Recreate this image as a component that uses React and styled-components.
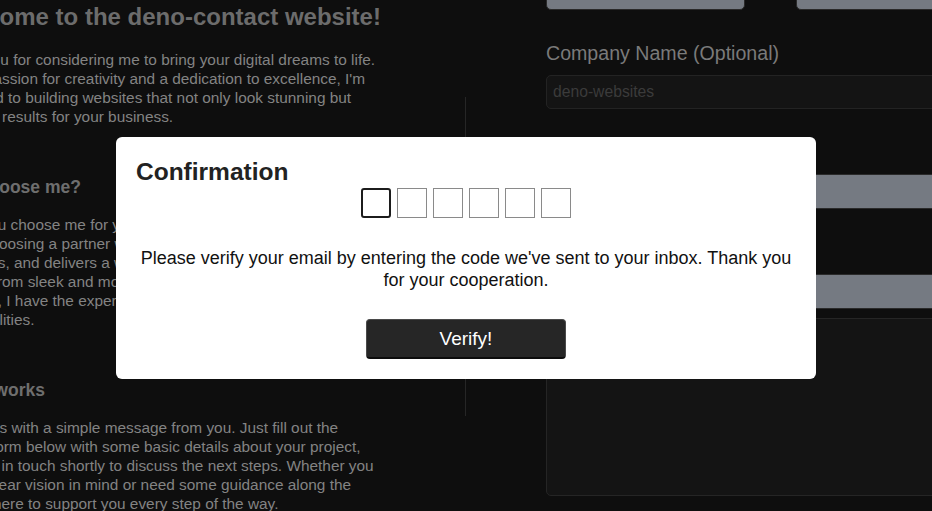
import React from "react";
import styled, { createGlobalStyle } from "styled-components";

const GlobalStyle = createGlobalStyle`
  * {
    box-sizing: border-box;
  }
  html,
  body {
    margin: 0;
    padding: 0;
    background: #0e0e0e;
    overflow: hidden;
  }
  body {
    font-family: "Liberation Sans", Arial, sans-serif;
  }
`;

const intro = [
  "Thank you for considering me to bring your digital dreams to life.",
  "With a passion for creativity and a dedication to excellence, I'm",
  "dedicated to building websites that not only look stunning but",
  "generate results for your business.",
];

const whyMe = [
  "When you choose me for your next website, you're choosing a",
  "you're choosing a partner who listens, understands your",
  "objectives, and delivers a website tailored to your needs.",
  "needs. From sleek and modern layouts to complex web",
  "solutions, I have the expertise to bring your ideas to life with",
  "functionalities.",
];

const howItWorks = [
  "It all starts with a simple message from you. Just fill out the",
  "contact form below with some basic details about your project,",
  "so I'll get in touch shortly to discuss the next steps. Whether you",
  "have a clear vision in mind or need some guidance along the",
  "way I'm here to support you every step of the way.",
];

const Lines = ({ lines }) =>
  lines.map((line, i) => (
    <React.Fragment key={i}>
      {line}
      {i < lines.length - 1 && <br />}
    </React.Fragment>
  ));

const App = () => {
  return (
    <>
      <GlobalStyle />
      <Page>
        <InfoColumn>
          <Title>Welcome to the deno-contact website!</Title>
          <Paragraph $first>
            <Lines lines={intro} />
          </Paragraph>
          <SectionTitle>Why choose me?</SectionTitle>
          <Paragraph>
            <Lines lines={whyMe} />
          </Paragraph>
          <SectionTitle>How it works</SectionTitle>
          <Paragraph>
            <Lines lines={howItWorks} />
          </Paragraph>
        </InfoColumn>

        <Divider />

        <FormColumn>
          <FieldRow>
            <Field $width="199px" $after={0}>
              <Label>First Name</Label>
              <Input $filled readOnly />
            </Field>
            <Field $width="199px" $after={0}>
              <Label>Last Name</Label>
              <Input $filled readOnly />
            </Field>
          </FieldRow>
          <Field>
            <Label>Company Name (Optional)</Label>
            <Input placeholder="deno-websites" />
          </Field>
          <Field>
            <Label>Email</Label>
            <Input $filled readOnly />
          </Field>
          <Field $after={9}>
            <Label>Phone</Label>
            <Input $filled readOnly />
          </Field>
          <MessageArea />
        </FormColumn>
      </Page>

      <Backdrop>
        <Dialog>
          <DialogTitle>Confirmation</DialogTitle>
          <CodeRow>
            {[0, 1, 2, 3, 4, 5].map((i) => (
              <CodeBox key={i} maxLength={1} $focused={i === 0} />
            ))}
          </CodeRow>
          <DialogText>
            Please verify your email by entering the code we've sent to your
            inbox. Thank you for your cooperation.
          </DialogText>
          <VerifyButton>Verify!</VerifyButton>
        </Dialog>
      </Backdrop>
    </>
  );
};

export default App;

const Page = styled.div`
  display: flex;
  align-items: flex-start;
  width: max-content;
  margin: -59px 0 0 -63px;
`;

const InfoColumn = styled.div`
  width: 448px;
  flex-shrink: 0;
  padding-top: 61px;
`;

const Title = styled.h1`
  margin: 0 0 0 7px;
  font-size: 24px;
  font-weight: 700;
  line-height: 30px;
  color: #6c6c6c;
  white-space: nowrap;
`;

const SectionTitle = styled.h2`
  margin: 50px 0 0;
  font-size: 17.5px;
  font-weight: 700;
  line-height: 22px;
  color: #6e6e6e;
`;

const Paragraph = styled.p`
  margin: ${({ $first }) => ($first ? "18px" : "17px")} 0 0;
  font-size: 15.4px;
  line-height: 19px;
  color: #838383;
  white-space: nowrap;
`;

const Divider = styled.div`
  width: 1px;
  height: 319px;
  flex-shrink: 0;
  margin: 156px 80px 0;
  background: #262626;
`;

const FormColumn = styled.div`
  width: 449px;
  flex-shrink: 0;
  display: flex;
  flex-direction: column;
`;

const FieldRow = styled.div`
  display: flex;
  gap: 51px;
  margin-bottom: 31px;
`;

const Field = styled.div`
  display: flex;
  flex-direction: column;
  width: ${({ $width }) => $width || "100%"};
  margin-bottom: ${({ $after }) => ($after ?? 31)}px;
`;

const Label = styled.label`
  font-size: 19.6px;
  line-height: 24px;
  color: #7a7a7a;
  margin-bottom: 10px;
  white-space: nowrap;
`;

const Input = styled.input`
  height: ${({ $filled }) => ($filled ? "35px" : "34px")};
  padding: 0 6px;
  border: 1px solid ${({ $filled }) => ($filled ? "#2a2a2a" : "#232323")};
  border-radius: 5px;
  background: ${({ $filled }) => ($filled ? "#757a82" : "#141414")};
  color: #cfcfcf;
  font-family: "Liberation Sans", Arial, sans-serif;
  font-size: 15.7px;
  outline: none;

  &::placeholder {
    color: #3b3b3b;
  }
`;

const MessageArea = styled.textarea`
  height: 178px;
  border: 1px solid #252525;
  border-radius: 5px;
  background: #141414;
  resize: none;
  outline: none;
`;

const Backdrop = styled.div`
  position: fixed;
  inset: 0;
  display: flex;
  justify-content: center;
  align-items: center;
  padding-top: 5px;
`;

const Dialog = styled.div`
  width: 700px;
  padding: 20px;
  display: flex;
  flex-direction: column;
  align-items: center;
  background: #ffffff;
  border-radius: 6px;
`;

const DialogTitle = styled.h2`
  align-self: stretch;
  margin: 0;
  font-size: 24.5px;
  font-weight: 700;
  line-height: 29px;
  color: #222222;
`;

const CodeRow = styled.div`
  display: flex;
  gap: 6px;
  margin-top: 2px;
`;

const CodeBox = styled.input`
  width: 30px;
  height: 30px;
  padding: 0;
  border: ${({ $focused }) =>
    $focused ? "2px solid #1c1c1c" : "1px solid #8a8a8a"};
  border-radius: ${({ $focused }) => ($focused ? "3px" : "0")};
  background: #fff;
  text-align: center;
  font-size: 18px;
  outline: none;
`;

const DialogText = styled.p`
  width: 100%;
  margin: 29px 0 0;
  font-size: 18px;
  line-height: 22px;
  color: #111111;
  text-align: center;
`;

const VerifyButton = styled.button`
  width: 200px;
  height: 40px;
  margin-top: 28px;
  border: 1px solid #4a4a4a;
  border-bottom: 2px solid #0c0c0c;
  border-radius: 4px;
  background: #262626;
  color: #ffffff;
  font-family: "Liberation Sans", Arial, sans-serif;
  font-size: 19px;
  cursor: pointer;
`;
